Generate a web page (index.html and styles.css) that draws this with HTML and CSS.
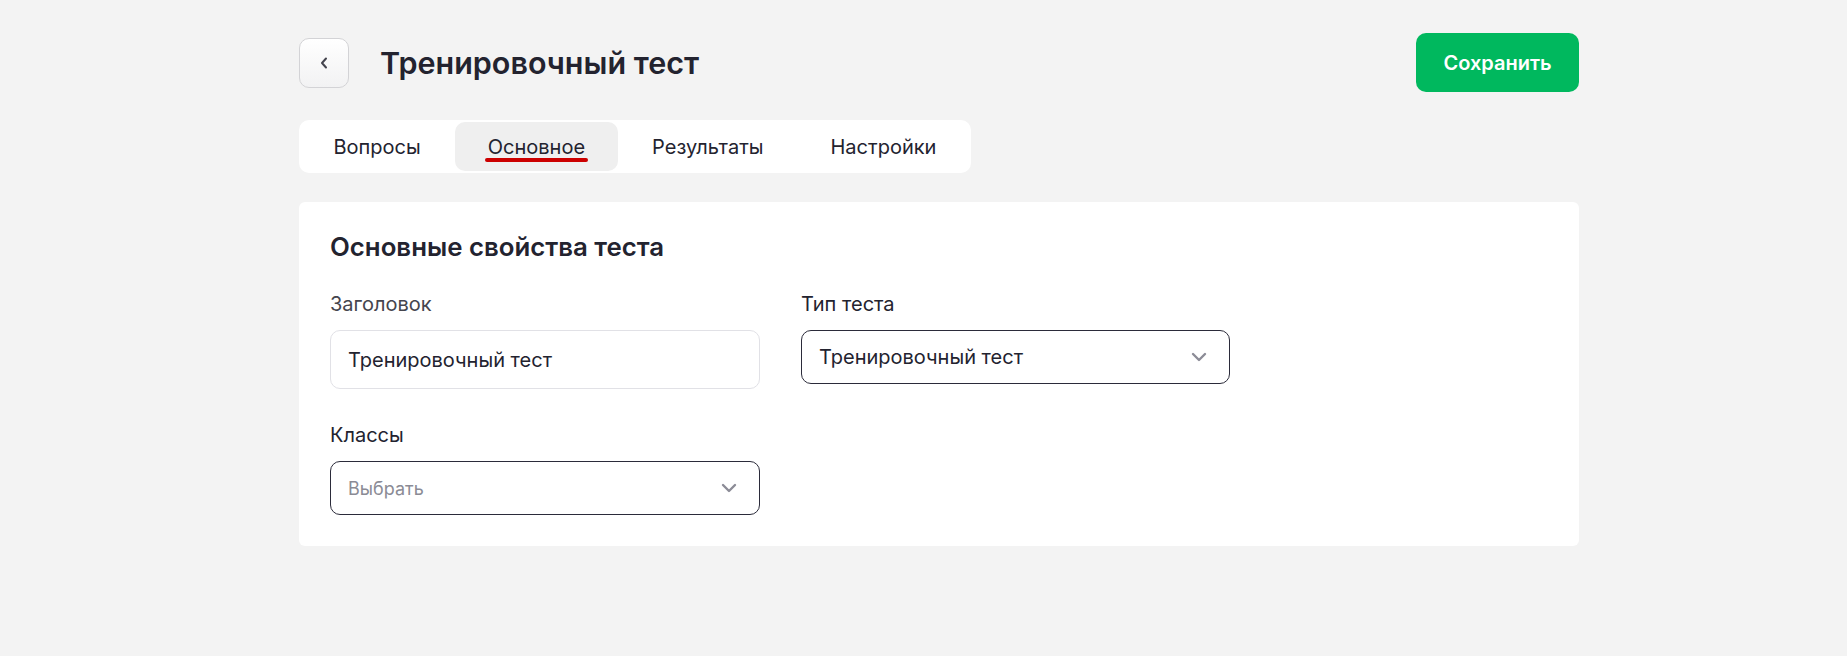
FILE: index.html
```html
<!DOCTYPE html>
<html lang="ru">
<head>
<meta charset="utf-8">
<title>Тренировочный тест</title>
<link rel="stylesheet" href="styles.css">
</head>
<body>
<div class="page">
  <header class="header">
    <div class="header-left">
      <button class="back-btn" aria-label="Назад">
        <svg width="10" height="14" viewBox="0 0 10 14"><path d="M7 2.5 L3 7 L7 11.5" fill="none" stroke="#44444e" stroke-width="2" stroke-linecap="round" stroke-linejoin="round"/></svg>
      </button>
      <h1 class="title">Тренировочный тест</h1>
    </div>
    <button class="save-btn">Сохранить</button>
  </header>

  <nav class="tabs">
    <div class="tab"><span class="tab-label">Вопросы</span><span class="tab-bar"></span></div>
    <div class="tab tab-active"><span class="tab-label">Основное</span><span class="tab-bar"></span></div>
    <div class="tab"><span class="tab-label">Результаты</span><span class="tab-bar"></span></div>
    <div class="tab"><span class="tab-label">Настройки</span><span class="tab-bar"></span></div>
  </nav>

  <section class="card">
    <h2 class="card-title">Основные свойства теста</h2>
    <div class="form-grid">
      <div class="field">
        <label class="label label-muted">Заголовок</label>
        <div class="input">Тренировочный тест</div>
      </div>
      <div class="field">
        <label class="label">Тип теста</label>
        <div class="select">
          <span class="select-value">Тренировочный тест</span>
          <svg class="chev" width="16" height="10" viewBox="0 0 16 10"><path d="M2 2 L8 8 L14 2" fill="none" stroke="#8c8c97" stroke-width="2.4" stroke-linecap="round" stroke-linejoin="round"/></svg>
        </div>
      </div>
      <div class="field">
        <label class="label">Классы</label>
        <div class="select">
          <span class="select-placeholder">Выбрать</span>
          <svg class="chev" width="16" height="10" viewBox="0 0 16 10"><path d="M2 2 L8 8 L14 2" fill="none" stroke="#8c8c97" stroke-width="2.4" stroke-linecap="round" stroke-linejoin="round"/></svg>
        </div>
      </div>
    </div>
  </section>
</div>
</body>
</html>
```

FILE: styles.css
```css
* { box-sizing: border-box; }

html, body {
  margin: 0;
  padding: 0;
  background: #f3f3f3;
}

body {
  font-family: Inter, "Noto Sans", sans-serif;
  color: #23232f;
}

.page {
  width: 1280px;
  margin-left: 299px;
  padding-top: 33px;
}

.header {
  display: flex;
  align-items: center;
  justify-content: space-between;
  height: 59px;
}

.header-left {
  display: flex;
  align-items: center;
  gap: 31px;
}

.back-btn {
  width: 50px;
  height: 50px;
  border: 1px solid #d3d3d6;
  border-radius: 10px;
  background: linear-gradient(180deg, #ffffff 0%, #f2f2f3 100%);
  display: flex;
  align-items: center;
  justify-content: center;
  padding: 0;
}

.title {
  margin: 0;
  font-size: 30.5px;
  font-weight: 600;
  color: #23232f;
}

.save-btn {
  width: 163px;
  height: 59px;
  border: 0;
  border-radius: 10px;
  background: #00b85e;
  color: #ffffff;
  font-family: Inter, "Noto Sans", sans-serif;
  font-size: 20px;
  font-weight: 600;
  padding: 0;
}

.tabs {
  margin-top: 28px;
  display: inline-flex;
  gap: 2px;
  padding: 2px;
  background: #ffffff;
  border-radius: 10px;
  height: 53px;
}

.tab {
  display: flex;
  flex-direction: column;
  align-items: center;
  padding: 13px 32.5px 0;
  border-radius: 10px;
  font-size: 20px;
  line-height: 24px;
  color: #23232f;
}

.tab-active {
  background: #efefef;
}

.tab-bar {
  align-self: stretch;
  margin: -1px -3px 0;
  height: 4px;
  border-radius: 2px;
  background: transparent;
}

.tab-active .tab-bar {
  background: #cc0000;
}

.card {
  margin-top: 29px;
  background: #ffffff;
  border-radius: 6px;
  padding: 30px 31px 31px;
}

.card-title {
  margin: 0;
  font-size: 25.8px;
  font-weight: 600;
  line-height: 29px;
  color: #23232f;
}

.form-grid {
  margin-top: 31px;
  display: grid;
  grid-template-columns: 430px 429px;
  column-gap: 41px;
  row-gap: 34px;
  align-items: start;
}

.field {
  display: flex;
  flex-direction: column;
  gap: 14px;
}

.label {
  font-size: 20px;
  line-height: 24px;
  color: #23232f;
}

.label-muted {
  color: #45454e;
}

.input {
  height: 59px;
  border: 1px solid #e1e1e6;
  border-radius: 10px;
  padding: 0 17px;
  display: flex;
  align-items: center;
  font-size: 20px;
  color: #23232f;
}

.select {
  height: 54px;
  border: 1px solid #2b2b3a;
  border-radius: 10px;
  padding: 0 22px 0 17px;
  display: flex;
  align-items: center;
  justify-content: space-between;
}

.select-value {
  font-size: 20px;
  color: #23232f;
}

.select-placeholder {
  font-size: 18px;
  color: #8b8b95;
}

.chev {
  display: block;
}
```
